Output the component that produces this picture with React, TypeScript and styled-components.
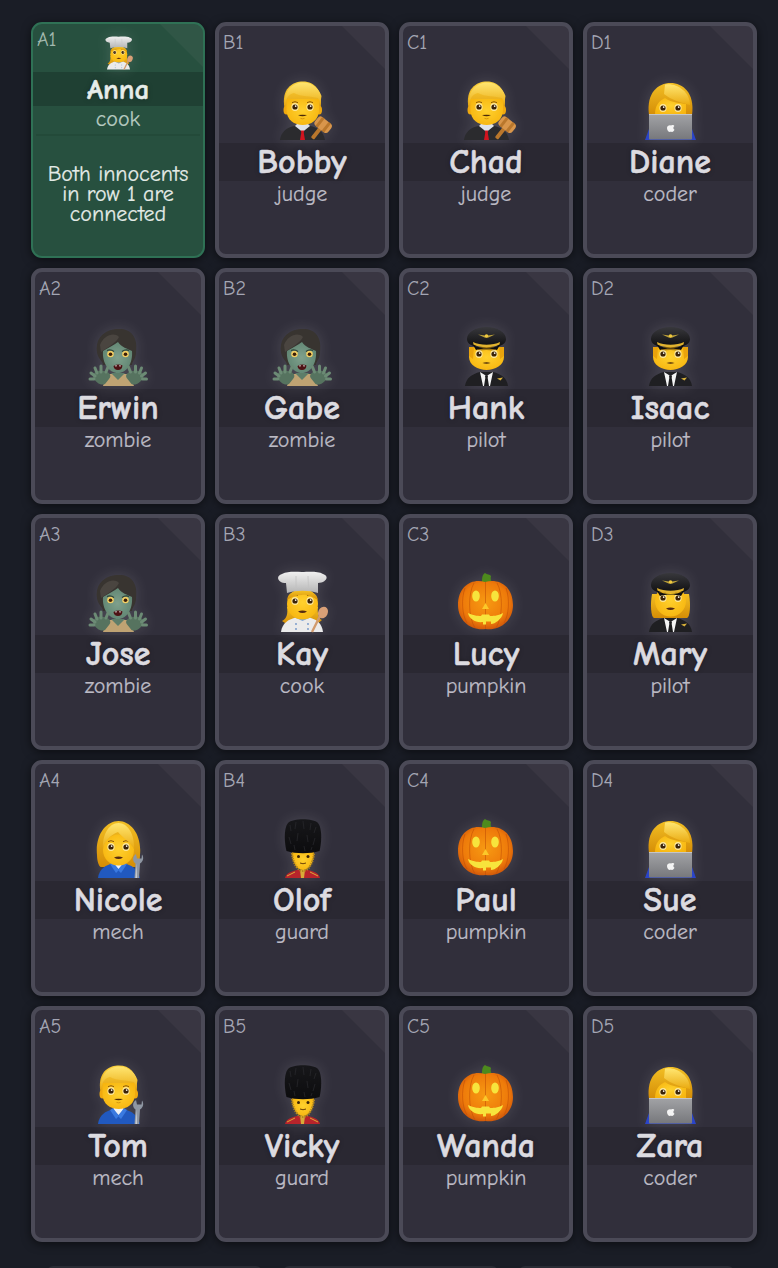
import React from "react";
import styled, { createGlobalStyle, css } from "styled-components";

const Global = createGlobalStyle`
  html, body { margin: 0; padding: 0; background: #1a1d26; }
  body { font-family: "Comic Neue", "Comic Sans MS", cursive; height: 1268px; overflow: hidden; }
`;

const Page = styled.main`
  display: flex;
  flex-direction: column;
  align-items: flex-start;
  gap: 24px;
  padding: 22px 0 0 31px;
`;

const Board = styled.section`
  display: grid;
  grid-template-columns: repeat(4, 174px);
  grid-auto-rows: 236px;
  gap: 10px;
`;

const Footer = styled.div`
  display: flex;
  gap: 21px;
  margin-left: 16px;
`;

const FooterButton = styled.div`
  width: 215px;
  height: 40px;
  border-radius: 6px;
  background: #2a2c35;
`;

const Card = styled.article<{ $revealed?: boolean }>`
  position: relative;
  display: flex;
  flex-direction: column;
  box-sizing: border-box;
  overflow: hidden;
  border-radius: 11px;
  border: 4px solid #4b4a57;
  background: #312f3b;
  box-shadow: 0 2px 10px rgba(0, 0, 0, 0.55);
  &::after {
    content: "";
    position: absolute;
    top: 0;
    right: 0;
    width: 43px;
    height: 43px;
    background: rgba(255, 240, 240, 0.045);
    clip-path: polygon(0 0, 100% 0, 100% 100%);
  }
  ${(p) =>
    p.$revealed &&
    css`
      border: 2px solid #2f7155;
      background: #27503f;
    `}
`;

const Coord = styled.span<{ $revealed?: boolean }>`
  position: absolute;
  top: ${(p) => (p.$revealed ? 5 : 6)}px;
  left: 4px;
  font-size: 20px;
  line-height: 22px;
  color: ${(p) => (p.$revealed ? "#a3b9af" : "#a4a6b4")};
`;

const Portrait = styled.div<{ $revealed?: boolean }>`
  display: flex;
  justify-content: center;
  align-items: flex-end;
  height: ${(p) => (p.$revealed ? 48 : 117)}px;
  padding-bottom: 2px;
  box-sizing: border-box;
  svg {
    display: block;
    overflow: visible;
    filter: drop-shadow(0 0 7px rgba(255, 255, 255, 0.13));
  }
`;

const NameBar = styled.div<{ $revealed?: boolean }>`
  display: flex;
  align-items: center;
  justify-content: center;
  height: ${(p) => (p.$revealed ? 34 : 38)}px;
  background: ${(p) => (p.$revealed ? "#1f4033" : "#2a2832")};
`;

const Name = styled.h2<{ $revealed?: boolean }>`
  margin: 0;
  font-size: ${(p) => (p.$revealed ? 29 : 34)}px;
  font-weight: 700;
  line-height: 1;
  color: ${(p) => (p.$revealed ? "#e6ece9" : "#dcdbe0")};
  -webkit-text-stroke: 0.5px currentColor;
  text-shadow: 0 0 5px rgba(0, 0, 0, 0.35);
`;

const Role = styled.div<{ $revealed?: boolean }>`
  margin-top: 1px;
  text-align: center;
  font-size: 22px;
  line-height: 24px;
  color: ${(p) => (p.$revealed ? "#b7cbc1" : "#bcbbc5")};
  -webkit-text-stroke: 0.2px currentColor;
`;

const Rule = styled.hr`
  width: 164px;
  height: 2px;
  margin: 3px auto 0;
  border: 0;
  background: #234a39;
`;

const Hint = styled.p`
  margin: 28px 8px 0;
  text-align: center;
  font-size: 22px;
  line-height: 20px;
  color: #e4ebe7;
  -webkit-text-stroke: 0.2px currentColor;
`;

const Eyes = ({ a = 25, b = 40, y = 30, r = 2.6 }: { a?: number; b?: number; y?: number; r?: number }) => (
  <g>
    {[a, b].map((x) => (
      <g key={x}>
        <ellipse cx={x} cy={y} rx={r + 1} ry={r + 1.3} fill="#fff6c8" opacity=".75" />
        <circle cx={x} cy={y} r={r} fill="#3b2308" />
        <circle cx={x + 0.7} cy={y - 0.9} r={r * 0.33} fill="#fff" />
      </g>
    ))}
  </g>
);

const Brows = ({ a = 25, b = 40, y = 25 }: { a?: number; b?: number; y?: number }) => (
  <path
    d={`M${a - 3} ${y + 0.6}Q${a} ${y - 1.2} ${a + 3} ${y + 0.6}M${b - 3} ${y + 0.6}Q${b} ${y - 1.2} ${b + 3} ${y + 0.6}`}
    stroke="#8f5b08"
    strokeWidth="1"
    fill="none"
  />
);

const Smile = ({ x = 32.5, y = 38 }: { x?: number; y?: number }) => (
  <g>
    <path d={`M${x - 4.5} ${y}Q${x} ${y + 2.4} ${x + 4.5} ${y}Q${x} ${y - 0.6} ${x - 4.5} ${y}Z`} fill="#4b2a08" />
    <path d={`M${x - 2} ${y + 3.4}Q${x} ${y + 4.2} ${x + 2} ${y + 3.4}`} stroke="#c98a0a" strokeWidth=".8" fill="none" />
  </g>
);

const ManHead = () => (
  <g>
    <path d="M14.500 31C11 12 22 4.500 33 4.500C45 4.500 53 14 50.500 31L48 36H17Z" fill="url(#hair)" />
    <ellipse cx="16.500" cy="33" rx="3" ry="4.500" fill="#f0a90f" />
    <ellipse cx="49" cy="33" rx="3" ry="4.500" fill="#f0a90f" />
    <path d="M16.500 22H49V33C49 43 41 48 32.700 48C24.500 48 16.500 43 16.500 33Z" fill="url(#skin)" />
    <path d="M15.500 29C16 20 19 17 24 16C31 20 42 19 48 21C49.500 23 50 26 50 29L51.500 19C48 8 38 5.500 33 5.500C22 5.500 12.500 15 15.500 29Z" fill="url(#hairLight)" />
    <Brows />
    <Eyes />
    <Smile />
  </g>
);

const WomanFace = ({ y = 0 }: { y?: number }) => (
  <g transform={`translate(0 ${y})`}>
    <ellipse cx="32.500" cy="35" rx="15.500" ry="15.500" fill="url(#skin)" />
    <Brows y={26} />
    <Eyes y={32} />
    <path d="M28 42.500Q32.500 40.500 37 42.500Q32.500 45.500 28 42.500Z" fill="#552a10" />
  </g>
);

const Wrench = () => (
  <g fill="#8f97a3">
    <path d="M50 39C46.500 41 46 46 49.500 48.500L48.500 63H53L54 48.500C57.500 46.500 58 42 56 39.500L55.500 43.500L51 43.500Z" />
    <path d="M50.500 48.500L49.500 63H51Z" fill="#c8ced6" />
  </g>
);

const Svg = ({ size, children }: { size: number; children: React.ReactNode }) => (
  <svg width={size} height={size} viewBox="0 0 64 64" aria-hidden="true">
    {children}
  </svg>
);

const Judge = () => (
  <>
    <path d="M10 63C11 54 18 50 25 49H40C47 50 54 55 55 63Z" fill="#2b2b2e" />
    <path d="M25 49L32.500 55L40 49L38 47H27Z" fill="#dfe3ea" />
    <path d="M31 53.500H34L33.800 56L35 63H30L31.200 56Z" fill="#d3141f" />
    <ManHead />
    <g transform="rotate(38 52 50)">
      <rect x="49.500" y="50" width="4" height="15" rx="1.200" fill="#b9772c" />
      <rect x="43" y="42" width="17" height="11" rx="3.500" fill="#d9964b" />
      <rect x="46" y="42" width="3" height="11" fill="#b9772c" />
      <rect x="54" y="42" width="3" height="11" fill="#b9772c" />
    </g>
  </>
);

const Coder = () => (
  <>
    <path d="M7 63L11 52H54L58 63Z" fill="#2b45c8" />
    <path d="M11 38C8 16 20 6 32.500 6C45 6 57 16 54 38Z" fill="url(#hairDeep)" />
    <path d="M17 38C17 28 21 24 27 21C34 26 42 26 48 27C48 32 48 38 48 38Z" fill="url(#skin)" />
    <path d="M27 7.500C38 5.500 52 14 52 28C44 26 33 23 26 17Z" fill="url(#hairLight)" />
    <Eyes y={31} a={25} b={40} />
    <rect x="11" y="37" width="43" height="25.500" rx="1" fill="url(#laptop)" />
    <rect x="11" y="37" width="43" height="1" fill="#c4c5c8" />
    <path d="M32.800 48.500C34.200 47.500 36 48 36.300 49C35 50 35 52 36.500 52.800C36 54 35 55 34 55C33 54.500 32.500 54.500 31.500 55C30 55 29 52.500 29 51C29 48.800 31.500 47.800 32.800 48.500Z" fill="#f4f4f4" />
  </>
);

const Zombie = () => (
  <>
    <path d="M17 63L21 51H43L48 63Z" fill="#bfa373" />
    <path d="M25 50L32 57L39 50Z" fill="#5d7d69" />
    <path d="M11 29C9 13 21 6 33 6C45 6 52 14 50 29C50 36 46 38 46 42H17C17 38 12 36 11 29Z" fill="#383430" />
    <path d="M17 28C22 25 28 22 32 19C35 24 42 26 46 28C47 40 41 50 32 50C23 50 16 40 17 28Z" fill="url(#zombieSkin)" />
    <path d="M14 22C18 12 28 9 33 14C30 20 22 24 15 29Z" fill="#4a4540" />
    <circle cx="24.500" cy="31" r="3.300" fill="#f3ce63" />
    <circle cx="39.500" cy="31" r="3.300" fill="#f3ce63" />
    <circle cx="24.500" cy="31.300" r="1.800" fill="#3a1d08" />
    <circle cx="39.500" cy="31.300" r="1.800" fill="#3a1d08" />
    <path d="M21 27.500Q24.500 26 28 28.500M36 28.500Q39.500 26 43 27.500" stroke="#2e4236" strokeWidth="1.200" fill="none" />
    <path d="M27.500 43Q32 40.500 36.500 42.500Q36 47 32 47Q28 47 27.500 43Z" fill="#4d1214" />
    <path d="M29 42.500L30 44L31 42.300M33 42.200L34 44L35 42.400" fill="#eee" />
    {[0, 1].map((i) => (
      <g key={i} transform={i ? "translate(64.500 0) scale(-1 1)" : undefined}>
        <path d="M7 54C7 48 13 47 18 48C24 49 26 53 23 56L19 61C15 63 10 60 7 54Z" fill="#56735f" />
        <g stroke="#6c8b75" strokeWidth="3" strokeLinecap="round">
          <path d="M9 53L5 50M11 50L9 45M15 49L15 43M20 49L22 44M8 56L4 56" />
        </g>
      </g>
    ))}
  </>
);

const Suit = () => (
  <>
    <path d="M11 63C12 55 18 51 26 49H39C47 51 53 55 54 63Z" fill="#1f1f22" />
    <path d="M26 49L29 63H36L39 49L32.500 53Z" fill="#f4f4f4" />
    <path d="M31 52.500H34L33.700 55L35 63H30L31.300 55Z" fill="#1b1b1d" />
    <path d="M43 55.500L49 54.500L46.500 57.500Z" fill="#d9b13a" />
  </>
);

const Cap = () => (
  <>
    <path d="M13 16C13 9 22 4 32.500 4C43 4 52 9 52 16C52 21 47 22 46 23H19C18 22 13 21 13 16Z" fill="url(#capBlack)" />
    <path d="M19 19C26 22.500 39 22.500 46 19L45.500 21.500C39 25 26 25 19.500 21.500Z" fill="#e1b32f" />
    <path d="M19 22C26 26 39 26 46 22L43 27C37 25 28 25 22 27Z" fill="#0d0d0e" />
    <path d="M24 11.500L31 12.500H34L41 11.500L34.500 14.500H30.500Z" fill="#bba03a" />
    <circle cx="32.500" cy="13" r="1.800" fill="#f0c93e" />
  </>
);

const Pilot = () => (
  <>
    <Suit />
    <path d="M15 24H50V34C50 42 41 47 32.500 47C24 47 15 42 15 34Z" fill="url(#skin)" />
    <path d="M15 24H20L19 36L15 33ZM50 24H45L46 36L50 33Z" fill="#e9a30c" />
    <path d="M22 24.500Q32 22 43 24.500L40 28Q32 26 25 28Z" fill="#6d4706" opacity=".6" />
    <Eyes y={31} a={25} b={40} />
    <path d="M28.500 40Q32.500 38.500 36.500 40Q32.500 41.500 28.500 40Z" fill="#4b2a08" />
    <Cap />
  </>
);

const WomanPilot = () => (
  <>
    <path d="M14 25C12 36 13 48 16 49H49C52 48 53 36 51 25Z" fill="url(#hairDeep)" />
    <Suit />
    <WomanFace y={-3} />
    <Cap />
  </>
);

const Cook = () => (
  <>
    <path d="M12 52C17 50 18 44 17 38L48 38C47 44 49 50 52 51L46 56H18Z" fill="url(#hairDeep)" />
    <path d="M11 63C12 54 19 50 26 48.500H39C46 50 52 54 53 63Z" fill="#ebebeb" />
    <path d="M24 48L32.500 52L41 48L40 46H25Z" fill="#7fa6d8" />
    <g fill="#6f94c7">
      <circle cx="26" cy="55" r=".9" />
      <circle cx="26" cy="60" r=".9" />
      <circle cx="38" cy="55" r=".9" />
      <circle cx="38" cy="60" r=".9" />
    </g>
    <WomanFace />
    <path d="M17 31C18 25 21 22 32 22C43 22 47 25 48 31C43 28 36 25 32 26C27 26 21 28 17 31Z" fill="url(#hairDeep)" />
    <path d="M17 24L16 14C8 14 5 7 12 5C18 2 26 3 32 3C38 3 48 2 53 5C60 7 56 14 48 14L48 24C38 21 27 21 17 24Z" fill="url(#cap)" />
    <path d="M26 7L26 20M38 7L38.500 20" stroke="#c2c2c2" strokeWidth=".8" />
    <path d="M42 63L50 47" stroke="#d19a6c" strokeWidth="2.400" />
    <ellipse cx="53" cy="43.500" rx="4.800" ry="6" transform="rotate(25 53 43.500)" fill="#d9a077" />
  </>
);

const Pumpkin = () => (
  <>
    <path d="M28 14C28 9 28 6 31 4C33 6 36 5 37 7C36 10 37 12 39 15Z" fill="#4d8a1d" />
    <path d="M31 13C18 9 4 17 4 36C4 52 17 62 31.500 60C46 62 59 52 59 36C59 17 45 9 31 13Z" fill="url(#pumpkin)" />
    <path d="M20 14C14 24 14 48 21 59M43 14C49 24 49 48 42 59M31.500 13V60M11 19C7 30 8 46 13 54M52 19C56 30 55 46 50 54" stroke="#bf4c06" strokeWidth="1" fill="none" opacity=".55" />
    <g fill="#f7e43c">
      <ellipse cx="22" cy="27" rx="3.800" ry="5.500" />
      <ellipse cx="41" cy="27" rx="3.800" ry="5.500" />
      <path d="M31.500 34L35 40H28Z" fill="#fbc82a" />
      <path d="M14 44C20 47 26 47 27 47L28 45.500H35L36 47C38 47 44 47 49 44C48 50 41 55 37 55V52.500H32V55.500H29V53C22 54 15 50 14 44Z" />
    </g>
  </>
);

const MechWoman = () => (
  <>
    <path d="M11 40C9 20 20 6 32.500 6C45 6 56 20 54 40C54 46 52 52 50 52H15C13 52 11 46 11 40Z" fill="url(#hairDeep)" />
    <path d="M12 63C13 54 20 50 26 48.500H39C45 50 52 54 54 63Z" fill="#2159bf" />
    <path d="M27 48.500L32.500 54L38 48.500L37 46H28Z" fill="#eef2f7" />
    <path d="M24 49L27 47L33 55L30 58ZM41 49L38 47L32 55L35 58Z" fill="#3a7ae0" />
    <WomanFace y={0} />
    <path d="M17 34C18 27 24 20 32 17C36 22 44 27 48 34C49 20 42 8 32.500 8C23 8 16 20 17 34Z" fill="url(#hairLight)" />
    <Wrench />
  </>
);

const MechMan = () => (
  <>
    <path d="M12 63C13 54 20 50 26 48.500H39C45 50 52 54 54 63Z" fill="#2159bf" />
    <path d="M27 48.500L32.500 54L38 48.500L37 46H28Z" fill="#eef2f7" />
    <path d="M24 49L27 47L33 55L30 58ZM41 49L38 47L32 55L35 58Z" fill="#3a7ae0" />
    <ManHead />
    <Wrench />
  </>
);

const Guard = () => (
  <>
    <path d="M15 63C16 58 22 56 27 55H38C43 56 49 58 50 63Z" fill="#b8242b" />
    <path d="M30 55H35L34 63H31Z" fill="#d8ab38" />
    <path d="M17 61L25 57M48 61L40 57" stroke="#d8ab38" strokeWidth="1" />
    <path d="M22 36H44C44 48 39 55 33 55C27 55 22 48 22 36Z" fill="url(#skin)" />
    <path d="M22 38C23 49 28 56 33 56C38 56 43 49 44 38" stroke="#b4881d" strokeWidth="2.200" strokeDasharray="1.400 1" fill="none" />
    <circle cx="28.500" cy="41.500" r="1.500" fill="#3b2308" />
    <circle cx="38" cy="41.500" r="1.500" fill="#3b2308" />
    <path d="M30 48Q33 49.500 36 48" stroke="#6e4206" strokeWidth="1" fill="none" />
    <path d="M16.500 36C14 26 14 13 18 8C23 3 43 3 48 8C52 13 52 26 49.500 36C40 39 26 39 16.500 36Z" fill="url(#fur)" />
    <path d="M20 10l1 6M26 7l-1 7M33 6l1 8M41 8l-1 7M46 12l-2 6M19 22l2 7M28 18l-1 8M37 20l1 7M45 23l-2 7M24 30l1 5M34 31l1 5M42 32l-1 3" stroke="#2a2a2e" strokeWidth=".7" />
  </>
);

const art = { Judge, Coder, Zombie, Pilot, WomanPilot, Cook, Pumpkin, MechWoman, MechMan, Guard };
type Art = keyof typeof art;

const SharedDefs = styled.svg`
  position: absolute;
  width: 0;
  height: 0;
`;

const Defs = () => (
  <SharedDefs aria-hidden="true">
    <defs>
      <radialGradient id="skin" cx=".5" cy=".45" r=".6">
        <stop offset="0" stopColor="#ffd12e" />
        <stop offset="1" stopColor="#f7b50f" />
      </radialGradient>
      <linearGradient id="hair" x1="0" y1="0" x2="0" y2="1">
        <stop offset="0" stopColor="#fbd13c" />
        <stop offset="1" stopColor="#e09a08" />
      </linearGradient>
      <linearGradient id="hairDeep" x1="0" y1="0" x2="0" y2="1">
        <stop offset="0" stopColor="#f2bf24" />
        <stop offset="1" stopColor="#d58d06" />
      </linearGradient>
      <linearGradient id="hairLight" x1="0" y1="0" x2="0" y2="1">
        <stop offset="0" stopColor="#ffe671" />
        <stop offset="1" stopColor="#eaaa10" />
      </linearGradient>
      <linearGradient id="laptop" x1="0" y1="0" x2="0" y2="1">
        <stop offset="0" stopColor="#a2a3a6" />
        <stop offset="1" stopColor="#77787c" />
      </linearGradient>
      <radialGradient id="zombieSkin" cx=".5" cy=".5" r=".6">
        <stop offset="0" stopColor="#7fa08c" />
        <stop offset="1" stopColor="#5d8370" />
      </radialGradient>
      <linearGradient id="cap" x1="0" y1="0" x2="0" y2="1">
        <stop offset="0" stopColor="#f0f0f0" />
        <stop offset="1" stopColor="#b4b4b4" />
      </linearGradient>
      <linearGradient id="capBlack" x1="0" y1="0" x2="0" y2="1">
        <stop offset="0" stopColor="#38383c" />
        <stop offset="1" stopColor="#111113" />
      </linearGradient>
      <radialGradient id="pumpkin" cx=".5" cy=".45" r=".6">
        <stop offset="0" stopColor="#f79a12" />
        <stop offset=".7" stopColor="#ee7a0a" />
        <stop offset="1" stopColor="#c9500a" />
      </radialGradient>
      <linearGradient id="fur" x1="0" y1="0" x2="0" y2="1">
        <stop offset="0" stopColor="#17171a" />
        <stop offset="1" stopColor="#0c0c0e" />
      </linearGradient>
    </defs>
  </SharedDefs>
);

type Person = { name: string; role: string; art: Art; hint?: string };

const people: Person[] = [
  { name: "Anna", role: "cook", art: "Cook", hint: "Both innocents in row 1 are connected" },
  { name: "Bobby", role: "judge", art: "Judge" },
  { name: "Chad", role: "judge", art: "Judge" },
  { name: "Diane", role: "coder", art: "Coder" },
  { name: "Erwin", role: "zombie", art: "Zombie" },
  { name: "Gabe", role: "zombie", art: "Zombie" },
  { name: "Hank", role: "pilot", art: "Pilot" },
  { name: "Isaac", role: "pilot", art: "Pilot" },
  { name: "Jose", role: "zombie", art: "Zombie" },
  { name: "Kay", role: "cook", art: "Cook" },
  { name: "Lucy", role: "pumpkin", art: "Pumpkin" },
  { name: "Mary", role: "pilot", art: "WomanPilot" },
  { name: "Nicole", role: "mech", art: "MechWoman" },
  { name: "Olof", role: "guard", art: "Guard" },
  { name: "Paul", role: "pumpkin", art: "Pumpkin" },
  { name: "Sue", role: "coder", art: "Coder" },
  { name: "Tom", role: "mech", art: "MechMan" },
  { name: "Vicky", role: "guard", art: "Guard" },
  { name: "Wanda", role: "pumpkin", art: "Pumpkin" },
  { name: "Zara", role: "coder", art: "Coder" },
];

export default function App() {
  return (
    <Page>
      <Global />
      <Defs />
      <Board>
        {people.map((p, i) => {
          const Art = art[p.art];
          const revealed = !!p.hint;
          const coord = "ABCD"[i % 4] + (Math.floor(i / 4) + 1);
          return (
            <Card key={p.name} $revealed={revealed}>
              <Coord $revealed={revealed}>{coord}</Coord>
              <Portrait $revealed={revealed}>
                <Svg size={revealed ? 35 : 64}>
                  <Art />
                </Svg>
              </Portrait>
              <NameBar $revealed={revealed}>
                <Name $revealed={revealed}>{p.name}</Name>
              </NameBar>
              <Role $revealed={revealed}>{p.role}</Role>
              {revealed && <Rule />}
              {revealed && <Hint>{p.hint}</Hint>}
            </Card>
          );
        })}
      </Board>
      <Footer>
        <FooterButton />
        <FooterButton />
        <FooterButton />
      </Footer>
    </Page>
  );
}
